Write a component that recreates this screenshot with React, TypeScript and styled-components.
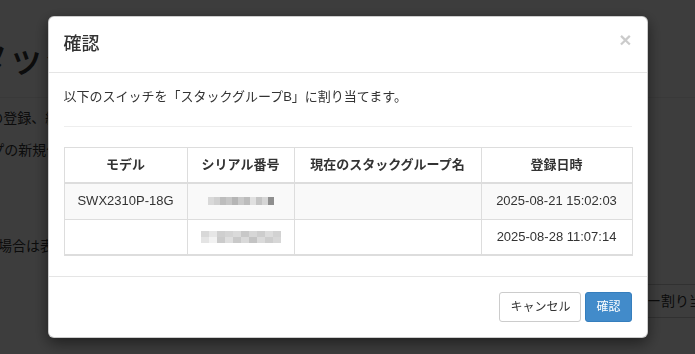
import React from "react";
import styled, { createGlobalStyle } from "styled-components";

const Global = createGlobalStyle`
  html, body { margin: 0; padding: 0; background: #fff; overflow: hidden; }
  body {
    font-family: "Liberation Sans", "Noto Sans CJK JP", sans-serif;
    font-size: 14px;
    line-height: 20px;
    color: #333;
  }
  * { box-sizing: border-box; }
`;

const Page = styled.div`
  width: 695px;
  height: 354px;
  overflow: hidden;
`;

const PageHeader = styled.div`
  margin-top: 40px;
  padding-bottom: 17px;
  border-bottom: 1px solid #eee;
`;

const PageTitle = styled.h1`
  margin: 0 0 0 -64px;
  font-size: 36px;
  line-height: 40px;
  font-weight: 500;
  white-space: nowrap;
`;

const Line = styled.p<{ $offset: number; $gap: number }>`
  margin: ${(p) => p.$gap}px 0 0 ${(p) => p.$offset}px;
  white-space: nowrap;
`;

const ActionRow = styled.div`
  display: flex;
  margin-top: 28px;
  padding-left: 592px;
`;

const PageButton = styled.button`
  flex: none;
  height: 34px;
  padding: 6px 12px;
  font: inherit;
  color: #333;
  background: #fff;
  border: 1px solid #ccc;
  border-radius: 4px;
  white-space: nowrap;
`;

const Overlay = styled.div`
  position: fixed;
  inset: 0;
  background: rgba(0, 0, 0, 0.76);
`;

const Dialog = styled.div`
  width: 600px;
  margin: 16px auto 0;
  background: #fff;
  border: 1px solid rgba(0, 0, 0, 0.2);
  border-radius: 6px;
  box-shadow: 0 5px 15px rgba(0, 0, 0, 0.5);
  font-size: 13px;
  line-height: 18.57px;
`;

const Header = styled.div`
  display: flex;
  justify-content: space-between;
  align-items: flex-start;
  padding: 15px;
  border-bottom: 1px solid #e5e5e5;
`;

const Title = styled.h4`
  margin: 0;
  font-size: 18px;
  line-height: 25px;
  font-weight: 500;
`;

const Close = styled.button`
  padding: 0;
  margin-top: -3px;
  background: transparent;
  border: 0;
  font-family: "Liberation Sans", sans-serif;
  font-size: 21px;
  font-weight: 700;
  line-height: 1;
  color: #000;
  opacity: 0.2;
`;

const Body = styled.div`
  padding: 15px;
`;

const Message = styled.div``;

const Rule = styled.hr`
  margin: 19px 0 20px;
  border: 0;
  border-top: 1px solid #eee;
`;

const Table = styled.table`
  width: 100%;
  margin-bottom: 5px;
  table-layout: fixed;
  border-collapse: collapse;
  border: 1px solid #ddd;
  border-bottom-width: 2px;
`;

const HeadCell = styled.th`
  padding: 8px;
  font-weight: 700;
  text-align: center;
  border: 1px solid #ddd;
  border-bottom-width: 2px;
  white-space: nowrap;
`;

const Row = styled.tr<{ $striped?: boolean }>`
  background: ${(p) => (p.$striped ? "#f9f9f9" : "#fff")};
`;

const Cell = styled.td`
  padding: 8px;
  height: 35px;
  text-align: center;
  border: 1px solid #ddd;
  white-space: nowrap;
`;

const Footer = styled.div`
  display: flex;
  justify-content: flex-end;
  gap: 4px;
  padding: 15px;
  border-top: 1px solid #e5e5e5;
`;

const Btn = styled.button<{ $primary?: boolean }>`
  height: 30px;
  padding: 5px 10px;
  font-family: inherit;
  font-size: 12px;
  line-height: 18px;
  border-radius: 3px;
  border: 1px solid ${(p) => (p.$primary ? "#357ebd" : "#ccc")};
  background: ${(p) => (p.$primary ? "#428bca" : "#fff")};
  color: ${(p) => (p.$primary ? "#fff" : "#333")};
`;

const BlurSvg = styled.svg`
  display: block;
  margin: 0 auto;
`;

const Blur = ({ rows, cell, h }: { rows: string[][]; cell: number; h: number }) => {
  const w = rows[0].length * cell;
  return (
    <BlurSvg width={w} height={rows.length * h} viewBox={`0 0 ${w} ${rows.length * h}`}>
      {rows.map((r, y) =>
        r.map((c, x) => <rect key={`${x}-${y}`} x={x * cell} y={y * h} width={cell} height={h} fill={c} />)
      )}
    </BlurSvg>
  );
};

const serial1 = [["#d9d9d9", "#d0d0d0", "#bdbdbd", "#c6c6c6", "#b5b5b5", "#c9c9c9", "#bcbcbc", "#e0e0e0", "#c4c4c4", "#d6d6d6", "#8f8f8f"]];
const serial2 = [
  ["#d8d8d8", "#e6e6e6", "#cfcfcf", "#d4d4d4", "#dadada", "#c8c8c8", "#d6d6d6", "#cdcdcd", "#dcdcdc", "#d2d2d2"],
  ["#e4e4e4", "#f2f2f2", "#cbcbcb", "#dedede", "#c9c9c9", "#d9d9d9", "#c3c3c3", "#dadada", "#cdcdcd", "#d7d7d7"],
];

export default function App() {
  return (
    <>
      <Global />
      <Page>
        <PageHeader>
          <PageTitle>スタックグループ管理</PageTitle>
        </PageHeader>
        <Line $offset={-66} $gap={10}>グループの登録、編集、削除を行います。</Line>
        <Line $offset={-51} $gap={12}>グループの新規作成を行う場合は、下のボタンを押してください。</Line>
        <Line $offset={-58} $gap={76}>未登録の場合は表示されません。</Line>
        <ActionRow>
          <PageButton>メンバー割り当て</PageButton>
        </ActionRow>
      </Page>
      <Overlay>
        <Dialog>
          <Header>
            <Title>確認</Title>
            <Close aria-label="閉じる">×</Close>
          </Header>
          <Body>
            <Message>以下のスイッチを「スタックグループB」に割り当てます。</Message>
            <Rule />
            <Table>
              <colgroup>
                <col style={{ width: 123 }} />
                <col style={{ width: 107 }} />
                <col style={{ width: 187 }} />
                <col style={{ width: 151 }} />
              </colgroup>
              <thead>
                <tr>
                  <HeadCell>モデル</HeadCell>
                  <HeadCell>シリアル番号</HeadCell>
                  <HeadCell>現在のスタックグループ名</HeadCell>
                  <HeadCell>登録日時</HeadCell>
                </tr>
              </thead>
              <tbody>
                <Row $striped>
                  <Cell>SWX2310P-18G</Cell>
                  <Cell>
                    <Blur rows={serial1} cell={6} h={8} />
                  </Cell>
                  <Cell />
                  <Cell>2025-08-21 15:02:03</Cell>
                </Row>
                <Row>
                  <Cell />
                  <Cell>
                    <Blur rows={serial2} cell={8} h={6} />
                  </Cell>
                  <Cell />
                  <Cell>2025-08-28 11:07:14</Cell>
                </Row>
              </tbody>
            </Table>
          </Body>
          <Footer>
            <Btn>キャンセル</Btn>
            <Btn $primary>確認</Btn>
          </Footer>
        </Dialog>
      </Overlay>
    </>
  );
}
